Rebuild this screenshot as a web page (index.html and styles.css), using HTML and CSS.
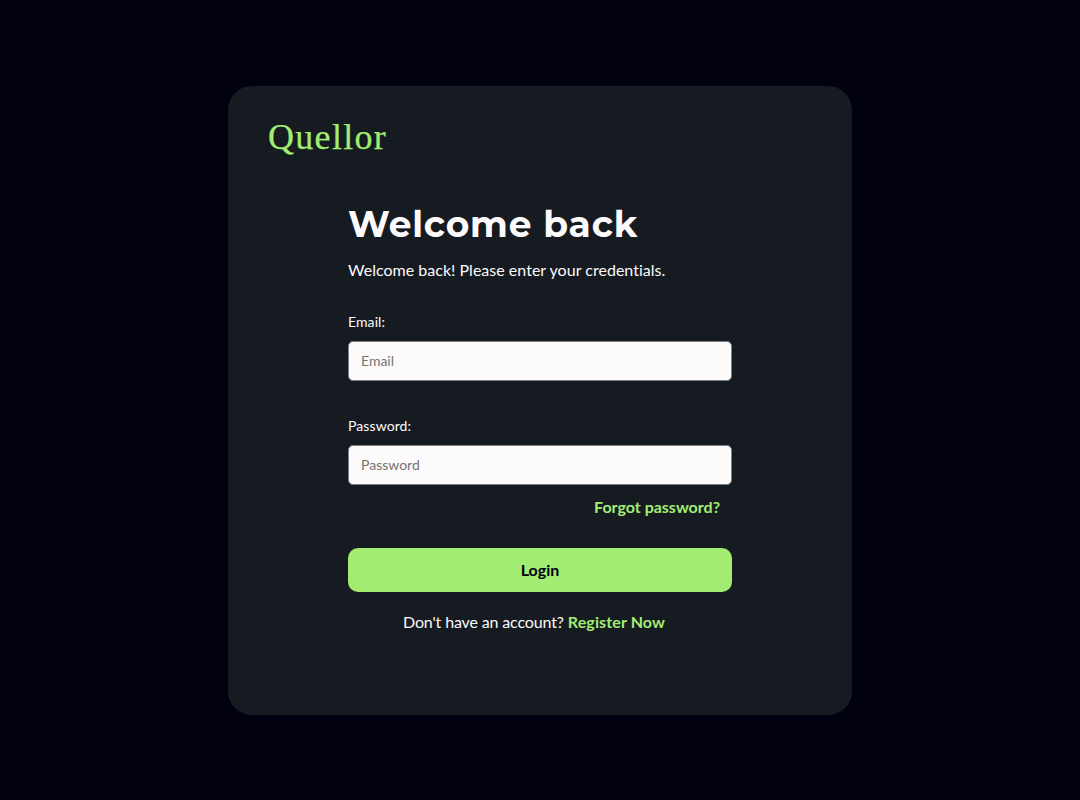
FILE: index.html
```html
<!DOCTYPE html>
<html lang="en">
<head>
<meta charset="utf-8">
<title>Quellor - Login</title>
<link rel="stylesheet" href="styles.css">
</head>
<body>
<main class="card">
  <div class="logo">Quellor</div>
  <form class="form">
    <h1 class="title">Welcome back</h1>
    <p class="subtitle">Welcome back! Please enter your credentials.</p>
    <div class="field">
      <label class="label" for="email">Email:</label>
      <input class="input" id="email" type="email" placeholder="Email">
    </div>
    <div class="field field-password">
      <label class="label" for="password">Password:</label>
      <input class="input" id="password" type="password" placeholder="Password">
    </div>
    <div class="forgot-row"><a class="link forgot" href="#">Forgot password?</a></div>
    <button class="login" type="button">Login</button>
    <p class="register">Don't have an account? <a class="link register-link" href="#">Register Now</a></p>
  </form>
</main>
</body>
</html>
```
FILE: styles.css
```css
* { box-sizing: border-box; }
html, body { margin: 0; height: 100%; }
body {
  background: #00000f;
  display: flex;
  align-items: center;
  justify-content: center;
  font-family: Lato, "Liberation Sans", sans-serif;
  font-variant-ligatures: none;
  color: #fcfafa;
}
.card {
  width: 624px;
  height: 629px;
  background: #161b22;
  border-radius: 24px;
  padding: 30px 40px 0;
  display: flex;
  flex-direction: column;
}
.logo {
  font-family: "Liberation Serif", serif;
  font-size: 36px;
  line-height: 42px;
  letter-spacing: 1.3px;
  -webkit-text-stroke: 0.25px #a3ec72;
  color: #a3ec72;
}
.form { width: 384px; margin: 44px 0 0 80px; display: flex; flex-direction: column; }
.title {
  margin: 0;
  font-family: Montserrat, Inter, sans-serif;
  font-weight: 700;
  font-size: 36px;
  line-height: 44px;
  letter-spacing: 0.8px;
  color: #fcfafa;
}
.subtitle { margin: 14px 0 0; font-size: 16px; line-height: 20px; letter-spacing: 0.02px; }
.field { display: flex; flex-direction: column; margin-top: 33px; }
.field-password { margin-top: 36px; }
.label { font-size: 14px; line-height: 17px; margin-bottom: 11px; letter-spacing: 0.1px; }
.input {
  height: 40px;
  width: 100%;
  padding: 0 12px;
  background: #fcfafa;
  border: 1px solid #7c8188;
  border-radius: 5px;
  font-family: Lato, sans-serif;
  font-size: 14px;
  outline: none;
}
.input::placeholder { color: #757575; opacity: 1; }
.forgot-row { display: flex; justify-content: flex-end; padding-right: 12px; margin-top: 12px; }
.link { color: #a3ec72; font-weight: 700; text-decoration: none; }
.forgot { font-size: 16px; line-height: 20px; }
.login {
  margin-top: 31px;
  height: 44px;
  background: #a3ec72;
  border: 0;
  border-radius: 10px;
  color: #00000f;
  font-family: Lato, sans-serif;
  font-weight: 700;
  font-size: 16px;
}
.register { margin: 20px 12px 0 0; text-align: center; font-size: 16px; line-height: 20px; letter-spacing: -0.14px; }
.register-link { letter-spacing: 0.12px; }
```
